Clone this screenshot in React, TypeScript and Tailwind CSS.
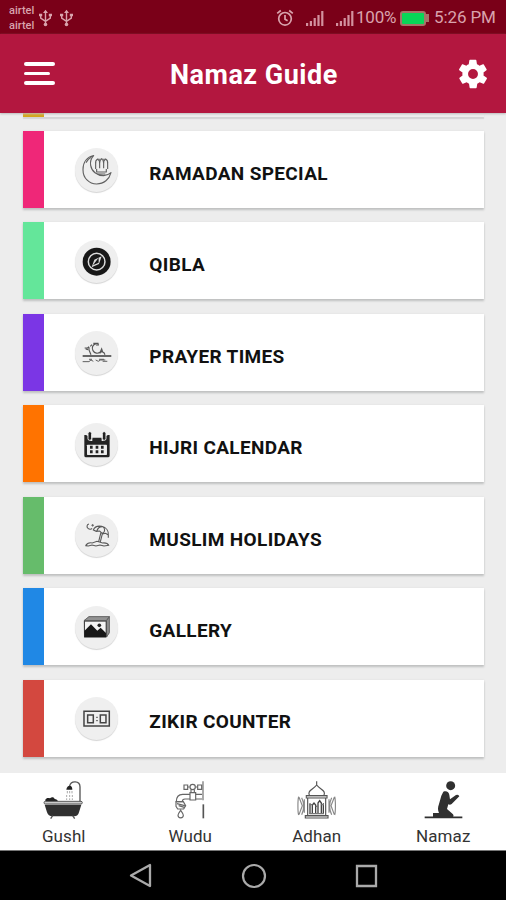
import type { ReactNode } from "react";

function UsbIcon() {
  return (
    <svg width="13" height="18" viewBox="0 0 13 18" fill="none" stroke="#d9a3ad" strokeWidth="1.4">
      <path d="M6.5 2v13M1.7 6v3.2l4.8 3.2 4.8-3.2V6" />
      <path d="M4 4 6.5.8 9 4zM0 4.7h3.2v2.6H0zM9.8 4.7H13v2.6H9.8z" fill="#d9a3ad" stroke="none" />
      <circle cx="6.5" cy="15.5" r="1.8" fill="#d9a3ad" stroke="none" />
    </svg>
  );
}

function SignalIcon() {
  return (
    <svg width="18" height="17" viewBox="0 0 18 17" fill="#d3929f">
      <path d="M0 13h2.2v3H0zM3.8 11H6v5H3.8zM7.6 8h2.2v8H7.6zM11.4 5h2.2v11h-2.2zM15.2 1h2.2v15h-2.2z" />
    </svg>
  );
}

function AlarmIcon() {
  return (
    <svg width="18" height="18" viewBox="0 0 18 18" fill="none" stroke="#d9a3ad" strokeWidth="1.7">
      <circle cx="9" cy="9.8" r="6.3" />
      <path d="M9 6v4.2l2.6 1.6M1.2 4.4 4.8 1.5M16.8 4.4l-3.6-2.9" />
    </svg>
  );
}

const ramadan = (
  <svg className="size-full" viewBox="195 84 130 130" fill="none" stroke="#606060" strokeWidth="3.4" strokeLinejoin="round">
    <path d="M251 107c-20 4-32 20-32 42 0 25 18 43 41 43 22 0 38-14 43-34-7 6-14 9-22 9-20 0-36-13-39-31-2-13 2-22 9-29z" />
    <path d="M228 128c5-8 9-13 16-16M257 147v-15c-1-8 2-13 6-15 5 3 7 8 6 15v13M269 130c0-7 2-11 6-14 4 3 6 7 6 14M281 145v-13c-1-7 1-12 6-15 4 2 7 7 6 15v15M260 147v9h29v-9M262 162h24" />
    <path d="M264 118h22" stroke="#777" />
  </svg>
);

const qibla = (
  <svg className="size-full" viewBox="195 359 130 130" fill="none">
    <circle cx="260" cy="424" r="42" fill="#181818" />
    <circle cx="260" cy="424" r="25" stroke="#ddd" strokeWidth="4.5" />
    <path d="m275 408-8 23-22 10 8-23z" fill="#ddd" />
    <path d="m264 418-9 12 9-4z" fill="#181818" stroke="#181818" strokeWidth="4" />
  </svg>
);

const prayer = (
  <svg className="size-full" viewBox="195 64 130 130" fill="none" stroke="#555" strokeWidth="2.8">
    <path d="M218 139h86" stroke="#666" strokeWidth="6" />
    <path d="M258 102c-10 4-14 12-9 21 5 9 15 10 22 4M224 115h9l4-4M237 113v8l6 14M241 110l5-5M234 120l-7-2M250 101h14l1 5h-7M271 127l4-9 3 9 4 2 3 6M269 131l8-7" strokeWidth="3.5" />
    <path d="M218 156h19l6-5 7 4M237 149h9M257 151l8 4 7-4h14M267 149h15M278 155h14" />
  </svg>
);

const hijri = (
  <svg className="size-full" viewBox="195 337 130 130">
    <path d="M223 373h7v18h17v-10h28v10h17v-18h7v62q0 5-5 5h-66q-5 0-5-5z" fill="#242424" />
    <path d="M228 375h13v18h-13zM280 375h15v18h-15z" fill="#242424" />
    <rect x="231" y="402" width="60" height="31" rx="2" fill="#eee" />
    <rect x="234" y="363" width="11" height="26" rx="5" fill="#202020" stroke="#eee" strokeWidth="3" />
    <rect x="277" y="363" width="11" height="26" rx="5" fill="#202020" stroke="#eee" strokeWidth="3" />
    <path d="M240 405h8v9h-8zM257 405h8v9h-8zM273 405h8v9h-8zM240 419h8v9h-8zM257 419h8v9h-8zM273 419h8v9h-8z" fill="#242424" />
  </svg>
);

const holidays = (
  <svg className="size-full" viewBox="195 73 130 130" fill="none" stroke="#595959" strokeWidth="3.3">
    <path d="M237 103c-7 1-8 10-2 14 4 3 9 2 11-1" />
    <path d="M248 103v8M244 107h8" strokeWidth="2.5" />
    <path d="M250 121c3-8 13-13 25-11 14 3 21 14 20 26l-8-5-9 2-9-9-10 1zM260 125c3-9 9-14 17-14M278 133c8-8 8-16 0-23M295 135v9" />
    <path d="m273 128-7 28M278 129l-7 28M227 168c4-7 11-10 20-8l14-5 17 5c10-1 16 2 19 8M226 168l9 1 11-3 12 3 12-3 12 3 15-2" />
  </svg>
);

const gallery = (
  <svg className="size-full" viewBox="195 347 130 130">
    <path d="m221 391 16-13h62v50l-10 13h-67z" fill="#929292" />
    <path d="m222 391 15-12h61l-9 12zM290 391l8-12v48l-8 13z" fill="none" stroke="#666" strokeWidth="3" />
    <path d="M222 391h68v50h-68z" fill="#444" />
    <path d="M225 394h62v44h-62z" fill="#f4f4f4" />
    <path d="m223 422 20-20 19 19 10-9 16 16v13h-65z" fill="#181818" />
    <circle cx="268" cy="405" r="5.5" fill="#242424" />
  </svg>
);

const zikir = (
  <svg className="size-full" viewBox="195 80 130 130" fill="none" stroke="#444" strokeWidth="4.5">
    <path d="M222 123h76v44h-76z" />
    <path d="M233 134h17v23h-17zM288 134h-17v23h17z" />
    <path d="M258 141h6M258 151h6" strokeWidth="2.5" />
  </svg>
);

type Entry = { label: string; stripe: string; icon: ReactNode };

const entries: Entry[] = [
  { label: "RAMADAN SPECIAL", stripe: "bg-[#ef2778]", icon: ramadan },
  { label: "QIBLA", stripe: "bg-[#64e69a]", icon: qibla },
  { label: "PRAYER TIMES", stripe: "bg-[#7b36e5]", icon: prayer },
  { label: "HIJRI CALENDAR", stripe: "bg-[#ff7300]", icon: hijri },
  { label: "MUSLIM HOLIDAYS", stripe: "bg-[#66bc6b]", icon: holidays },
  { label: "GALLERY", stripe: "bg-[#2088e5]", icon: gallery },
  { label: "ZIKIR COUNTER", stripe: "bg-[#d3483f]", icon: zikir },
];

const bath = (
  <svg className="h-[39px] w-10" viewBox="131 47 120 117" fill="none">
    <path d="M242 110V65c0-20-28-20-31-3" stroke="#555" strokeWidth="4" />
    <path d="M201 73c1-8 5-12 10-12s8 4 8 12z" fill="#222" />
    <path d="M204 77v7M211 77v7M218 77v7M202 89v6M211 89v6M219 89v6M202 99v5M211 99v5M219 99v5" stroke="#999" strokeWidth="2.5" />
    <path d="M138 109v-6c3-6 9-6 14-4 6-5 12-3 14 2 5 0 9 3 10 8z" fill="#222" />
    <path d="M136 118h110l-7 23q-3 12-14 12h-66q-12 0-16-12z" fill="#303030" />
    <path d="m160 151-6 9M220 151l6 9" stroke="#555" strokeWidth="4" />
    <rect x="134" y="108" width="115" height="8" rx="4" fill="#ccc" stroke="#444" strokeWidth="2.5" />
  </svg>
);

const tap = (
  <svg className="h-[39px] w-10" viewBox="511 47 120 117" fill="none" stroke="#666" strokeWidth="3.5">
    <path d="M610 48v57" strokeWidth="5" stroke="#999" />
    <path d="M611 117v42" strokeWidth="5" stroke="#555" />
    <path d="M553 59h11v13h-11zM594 59h12v13h-12zM564 65h6M588 65h6" />
    <circle cx="579" cy="65" r="8" />
    <path d="M574 73v9M584 73v9M571 82h17v22h-17z" />
    <path d="M571 87h-22c-13 0-19 9-19 22h18c0-5 3-8 8-8h15M588 87h19M588 101h19" />
    <path d="M529 109h22l7 12-6 10h-18l-5-8zM532 115l23 6M537 121l17 5M543 135c-5 7-8 11-8 15 0 10 16 10 16 0 0-4-3-8-8-15z" />
  </svg>
);

const mosque = (
  <svg className="h-[39px] w-10" viewBox="132 47 120 117" fill="none" stroke="#555" strokeWidth="3.5">
    <path d="M194 48v13M172 90c-6-15 10-16 22-31 12 15 28 16 22 31" />
    <path d="M163 91h62v7h-62zM167 99v50M221 99v50M160 151h68v7h-68z" />
    <path d="M163 95h62M161 154h65" stroke="#888" strokeWidth="2" />
    <path d="M174 146v-32M181 146v-27l5-6 5 6v27M198 146v-33l5-7 5 7v33M214 146v-32" stroke="#444" strokeWidth="4" />
    <path d="M172 145h44M172 118h9M191 123h7M208 118h8" stroke="#777" />
    <path d="M140 94c-3 10-3 46 0 55M149 97c8 16 8 34 0 51M157 102v40M141 96l10 25-10 27M248 94c3 10 3 46 0 55M239 97c-8 16-8 34 0 51M231 102v40M247 96l-10 25 10 27" stroke="#888" />
  </svg>
);

const kneeling = (
  <svg className="h-[39px] w-10" viewBox="511 47 120 117">
    <circle cx="594" cy="61" r="13.5" fill="#303030" />
    <path d="M572 79c9-4 17 1 18 10l2 13 18-13q8-3 10 4l-23 23q-5 4-10 1l-4 14 18 16q5 9-5 9h-55v-13h18c-4-9-4-16 0-27l7-25z" fill="#303030" />
    <path d="M516 156h113" stroke="#303030" strokeWidth="5" />
  </svg>
);

const tabs = [
  { label: "Gushl", icon: bath },
  { label: "Wudu", icon: tap },
  { label: "Adhan", icon: mosque },
  { label: "Namaz", icon: kneeling },
];

export default function App() {
  return (
    <div className="flex h-[900px] w-[506px] flex-col overflow-hidden bg-[#ededed] font-[Roboto,sans-serif]">
      <div className="flex h-[34px] shrink-0 items-center bg-[#7a0018] pt-[2px] pl-[9px] text-[#d9a3ad]">
        <div className="w-[30px] text-[11px] leading-[15.5px] font-medium">
          <div>airtel</div>
          <div>airtel</div>
        </div>
        <div className="flex w-[237px] gap-2"><UsbIcon /><UsbIcon /></div>
        <div className="w-[30px]"><AlarmIcon /></div>
        <div className="w-[30px]"><SignalIcon /></div>
        <SignalIcon />
        <span className="ml-[2px] w-[44px] text-[17px] tracking-[-0.2px]">100%</span>
        <div className="flex w-[34px] items-center">
          <div className="h-[15px] w-[26px] rounded-[3px] border-2 border-[#a57368] bg-[#08d657]" />
          <div className="h-2 w-[3px] bg-[#a57368]" />
        </div>
        <span className="text-[17px] tracking-[-0.1px] whitespace-nowrap">5:26 PM</span>
      </div>

      <header className="z-10 flex h-[79px] shrink-0 items-center bg-[#b3173f] pr-[17px] pl-6 text-white shadow-[0_1px_2px_#bbb]">
        <button className="flex w-[146px] flex-col gap-[6px]" aria-label="Menu">
          <span className="h-[3.5px] w-[31px] rounded-sm bg-white" />
          <span className="h-[3.5px] w-[26px] rounded-sm bg-white" />
          <span className="h-[3.5px] w-[31px] rounded-sm bg-white" />
        </button>
        <h1 className="flex-1 pt-[3px] text-[27px] font-bold tracking-[0.5px]">Namaz Guide</h1>
        <svg width="34" height="34" viewBox="0 0 24 24" fill="#fff" className="-mr-px">
          <path d="M19.4 13c.1-.3.1-.7.1-1s0-.7-.1-1l2.1-1.6c.2-.2.2-.4.1-.7l-2-3.4c-.1-.2-.4-.3-.6-.2l-2.5 1c-.5-.4-1.1-.8-1.7-1l-.4-2.7c0-.2-.2-.4-.5-.4h-4c-.2 0-.5.2-.5.4l-.4 2.7c-.6.2-1.2.6-1.7 1l-2.5-1c-.2-.1-.5 0-.6.2l-2 3.4c-.1.2-.1.5.1.7L4.6 11c-.1.3-.1.7-.1 1s0 .7.1 1l-2.1 1.6c-.2.2-.2.4-.1.7l2 3.4c.1.2.4.3.6.2l2.5-1c.5.4 1.1.8 1.7 1l.4 2.7c0 .2.2.4.5.4h4c.2 0 .5-.2.5-.4l.4-2.7c.6-.2 1.2-.6 1.7-1l2.5 1c.2.1.5 0 .6-.2l2-3.4c.1-.2.1-.5-.1-.7zM12 15.5a3.5 3.5 0 1 1 0-7 3.5 3.5 0 0 1 0 7z" />
        </svg>
      </header>

      <main className="flex h-[659.5px] shrink-0 flex-col overflow-hidden px-[23px]">
        <div className="mb-[14px] flex h-1 w-[461px] shrink-0 bg-[#eee] shadow-[0_2px_1px_#d3d4d4]">
          <div className="w-[21px] bg-[#d4a51b]" />
        </div>
        <div className="flex flex-col gap-[14.45px]">
          {entries.map((entry) => (
            <div key={entry.label} className="flex h-[77px] w-[461px] shrink-0 items-center bg-white shadow-[0_2px_2px_#bfc0c0,0_0_2px_#dedede]">
              <div className={`h-full w-[21px] ${entry.stripe}`} />
              <div className="mt-px ml-[31px] size-[43.3px] rounded-full bg-[#efefef] shadow-[0_1px_1px_#d4d4d4]">{entry.icon}</div>
              <span className="mt-[9px] ml-[31px] text-[19px] font-bold tracking-[0.35px] whitespace-nowrap text-[#111]">{entry.label}</span>
            </div>
          ))}
        </div>
      </main>

      <nav className="grid h-[78.5px] shrink-0 grid-cols-4 border-b border-[#777] bg-white pt-2">
        {tabs.map((tab) => (
          <div key={tab.label} className="flex flex-col items-center">
            {tab.icon}
            <span className="mt-[5px] ml-px text-[17px] leading-[22px] tracking-[0.1px] text-[#333]">{tab.label}</span>
          </div>
        ))}
      </nav>

      <div className="flex flex-1 items-center justify-center gap-[88px] bg-black">
        <svg width="25" height="26" viewBox="0 0 25 26" fill="none" stroke="#aaa" strokeWidth="2.3" strokeLinejoin="round"><path d="M22 2v21L3 12.5z" /></svg>
        <svg width="26" height="26" viewBox="0 0 26 26" fill="none" stroke="#aaa" strokeWidth="2.2"><circle cx="13" cy="13" r="11" /></svg>
        <svg width="23" height="24" viewBox="0 0 23 24" fill="none" stroke="#aaa" strokeWidth="2.3"><path d="M2 2h19v20H2z" /></svg>
      </div>
    </div>
  );
}
